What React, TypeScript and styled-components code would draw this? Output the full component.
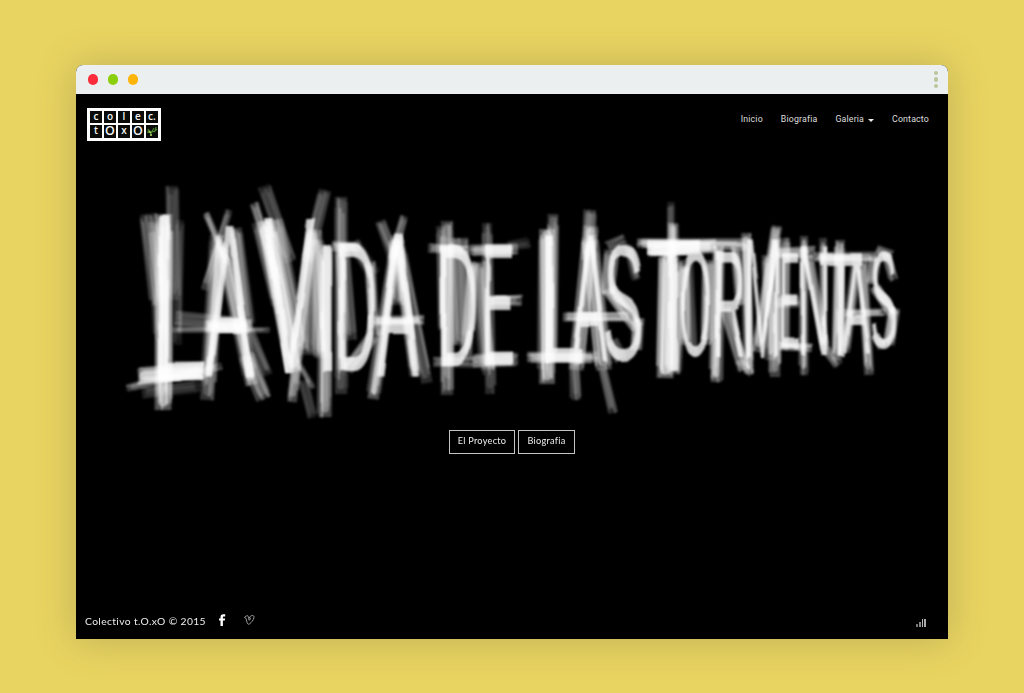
import React from "react";
import styled, { createGlobalStyle } from "styled-components";

const GlobalStyle = createGlobalStyle`
  * { box-sizing: border-box; }
  body { margin: 0; background: #e8d461; }
`;

const Page = styled.div`
  height: 693px;
  padding: 65px 76px 55px;
  overflow: hidden;
  background: #e8d461;
`;

const Window = styled.main`
  display: flex;
  flex-direction: column;
  width: 872px;
  height: 573.5px;
  border-radius: 7px 7px 0 0;
  overflow: hidden;
  background: #000;
  box-shadow: 0 1px 38px rgba(100, 88, 60, 0.3);
`;

const TitleBar = styled.div`
  display: flex;
  flex: 0 0 29px;
  align-items: center;
  justify-content: space-between;
  padding: 0 10px 0 11.5px;
  background: #ebeff0;
`;

const Lights = styled.div`
  display: flex;
  gap: 10px;
`;

const Light = styled.span<{ $color: string }>`
  width: 10.2px;
  height: 10.2px;
  border-radius: 50%;
  background: ${(p) => p.$color};
`;

const Dots = styled.div`
  display: flex;
  flex-direction: column;
  gap: 2px;
`;

const Dot = styled.span`
  width: 4.4px;
  height: 4.4px;
  border-radius: 50%;
  background: #bac69e;
`;

const Header = styled.header`
  display: flex;
  justify-content: space-between;
  align-items: flex-start;
  height: 84px;
  padding: 13px 19px 0 11px;
`;

const Logo = styled.div`
  display: grid;
  grid-template-columns: repeat(5, 12.3px);
  grid-template-rows: 12.6px 12.6px;
  gap: 1.7px;
  width: 74px;
  height: 33.5px;
  margin-top: 0.5px;
  padding: 3.3px 2.8px;
  background: #fff;
`;

const Cell = styled.span<{ $big?: boolean }>`
  display: flex;
  align-items: center;
  justify-content: center;
  padding-bottom: 2px;
  background: #090b09;
  color: #f3f3f3;
  font: 600 ${(p) => (p.$big ? 12.5 : 10)}px/11px "Open Sans", sans-serif;
`;

const Nav = styled.nav`
  display: flex;
  gap: 18px;
  padding-top: 6px;
`;

const NavLink = styled.a`
  display: flex;
  align-items: center;
  gap: 4px;
  color: #dedede;
  font: 400 8.8px/12px Roboto, sans-serif;
  letter-spacing: 0.16px;
`;

const Caret = styled.span`
  margin-top: 2px;
  border: 3px solid transparent;
  border-top-color: #eee;
  border-bottom: 0;
`;

const Hero = styled.section`
  flex: 1;
`;

const Artwork = styled.svg`
  display: block;
  width: 872px;
  height: 252px;
  overflow: visible;
`;

const Actions = styled.div`
  display: flex;
  justify-content: center;
  gap: 3px;
`;

const Button = styled.button<{ $width: number }>`
  width: ${(p) => p.$width}px;
  height: 24px;
  padding: 0 0 3px;
  border: 1px solid #c4c4c4;
  background: #000;
  color: #ececec;
  font: 400 9.2px/18px Lato, sans-serif;
  letter-spacing: 0.25px;
  white-space: nowrap;
`;

const Footer = styled.footer`
  display: flex;
  align-items: center;
  height: 36px;
  padding: 0 21px 0 9px;
  color: #eee;
`;

const Copyright = styled.span`
  width: 134px;
  font: 400 10.3px/16px Lato, sans-serif;
  letter-spacing: 0.37px;
  white-space: nowrap;
`;

const Social = styled.a<{ $width: number }>`
  display: flex;
  width: ${(p) => p.$width}px;
  margin-top: -1px;
  color: #fff;
`;

const Bars = styled.div`
  display: flex;
  align-items: flex-end;
  gap: 1px;
  height: 9px;
  margin: 3px 1px 0 auto;
`;

const Bar = styled.i<{ $h: number; $c: string }>`
  width: 1.7px;
  height: ${(p) => p.$h}px;
  background: ${(p) => p.$c};
`;

// Horizontal extents of Liberation Sans capitals, in 1/2048 em.
const METRICS: Record<string, [number, number]> = {
  L: [168, 1062],
  A: [4, 1362],
  V: [9, 1356],
  I: [189, 380],
  D: [168, 1381],
  E: [168, 1278],
  S: [93, 1272],
  T: [42, 1206],
  O: [97, 1495],
  R: [168, 1409],
  M: [168, 1539],
  N: [156, 1311],
};

type Glyph = [string, number, number, number, number];

// Letter, left, right, top, bottom.
const WORDS: Glyph[][] = [
  [["L", 159, 204, 215, 380], ["A", 206, 253, 228, 377]],
  [["V", 263, 315, 218, 374], ["I", 322, 331, 245, 372], ["D", 339, 375, 243, 371], ["A", 376, 420, 234, 376]],
  [["D", 441, 475, 245, 366], ["E", 485, 513, 245, 365]],
  [["L", 545, 582, 235, 362], ["A", 572, 608, 236, 362], ["S", 606, 641, 246, 359]],
  [
    ["T", 646, 700, 241, 372],
    ["O", 681, 710, 251, 357],
    ["R", 716, 744, 251, 357],
    ["M", 747, 778, 240, 357],
    ["E", 781, 799, 253, 349],
    ["N", 801, 827, 247, 355],
    ["T", 820, 862, 254, 357],
    ["A", 842, 871, 260, 354],
    ["S", 872, 895, 254, 348],
  ],
];

// Dry brush smears: x1, y1, x2, y2, width, strength.
const SMEARS: number[][] = [
  [172, 186, 173, 300, 14, 0.35],
  [148, 214, 160, 305, 18, 0.45],
  [155, 222, 162, 340, 15, 0.4],
  [164, 214, 163, 410, 19, 0.9],
  [180, 220, 178, 345, 9, 0.25],
  [127, 388, 222, 366, 9, 0.5],
  [138, 376, 205, 371, 17, 1],
  [142, 393, 200, 386, 12, 0.3],
  [206, 213, 228, 265, 7, 0.6],
  [229, 210, 204, 290, 8, 0.5],
  [217, 235, 207, 400, 16, 0.55],
  [220, 235, 209, 375, 9, 0.7],
  [235, 228, 247, 325, 15, 0.6],
  [222, 245, 252, 385, 15, 0.8],
  [245, 320, 268, 375, 11, 0.35],
  [246, 355, 264, 399, 18, 0.5],
  [172, 330, 270, 330, 6, 0.5],
  [175, 318, 245, 324, 16, 0.35],
  [205, 326, 252, 326, 13, 1],
  [264, 186, 290, 262, 14, 0.35],
  [254, 203, 279, 285, 9, 0.6],
  [258, 222, 278, 305, 15, 0.45],
  [274, 220, 300, 350, 20, 0.6],
  [266, 220, 294, 372, 18, 0.95],
  [325, 190, 307, 262, 14, 0.42],
  [312, 229, 292, 402, 11, 0.75],
  [315, 240, 310, 355, 21, 0.5],
  [300, 365, 313, 388, 6, 0.5],
  [303, 380, 312, 418, 10, 0.28],
  [326, 245, 325, 417, 15, 0.75],
  [315, 230, 321, 358, 14, 0.6],
  [341, 197, 341, 394, 14, 0.5],
  [341, 245, 342, 370, 12, 0.5],
  [342, 249, 350, 340, 16, 0.42],
  [332, 246, 360, 247, 12, 0.75],
  [353, 242, 374, 275, 15, 0.35],
  [370, 262, 374, 335, 11, 0.6],
  [374, 335, 347, 370, 14, 0.55],
  [380, 221, 395, 260, 11, 0.45],
  [404, 216, 391, 262, 9, 0.5],
  [397, 236, 373, 399, 13, 0.85],
  [400, 248, 427, 383, 13, 0.45],
  [397, 240, 415, 376, 12, 0.75],
  [397, 240, 398, 305, 18, 0.55],
  [373, 321, 424, 320, 11, 0.85],
  [447, 221, 447, 395, 14, 0.6],
  [441, 226, 443, 330, 11, 0.45],
  [447, 245, 448, 366, 14, 0.6],
  [458, 238, 462, 345, 22, 0.55],
  [473, 262, 466, 358, 11, 0.65],
  [428, 248, 470, 250, 10, 0.6],
  [433, 362, 475, 362, 10, 0.45],
  [487, 223, 490, 394, 11, 0.45],
  [478, 262, 488, 370, 16, 0.65],
  [470, 250, 518, 249, 12, 0.8],
  [508, 246, 530, 243, 10, 0.25],
  [489, 301, 522, 300, 11, 0.6],
  [472, 361, 518, 359, 14, 0.65],
  [553, 214, 551, 355, 12, 0.6],
  [547, 229, 547, 384, 18, 0.9],
  [527, 357, 598, 357, 12, 0.8],
  [590, 210, 587, 260, 14, 0.55],
  [591, 226, 576, 370, 17, 0.75],
  [590, 240, 604, 370, 18, 0.75],
  [574, 358, 576, 400, 10, 0.45],
  [602, 366, 613, 413, 9, 0.38],
  [563, 317, 629, 317, 10, 0.8],
  [607, 294, 611, 250, 15, 0.65],
  [608, 248, 626, 240, 14, 0.35],
  [628, 246, 636, 280, 9, 0.4],
  [608, 288, 638, 328, 14, 0.8],
  [638, 318, 636, 350, 13, 0.7],
  [612, 340, 621, 360, 12, 0.4],
  [671, 202, 671, 255, 8, 0.38],
  [673, 223, 673, 260, 11, 0.75],
  [637, 243, 748, 244, 10, 0.85],
  [648, 251, 716, 247, 13, 0.9],
  [668, 252, 665, 378, 19, 1],
  [680, 260, 674, 374, 15, 0.65],
  [684, 266, 686, 345, 13, 0.7],
  [708, 260, 706, 345, 12, 0.7],
  [689, 262, 694, 355, 9, 0.3],
  [719, 246, 716, 382, 12, 0.85],
  [735, 246, 740, 305, 10, 0.6],
  [725, 308, 745, 370, 12, 0.6],
  [746, 233, 749, 374, 11, 0.85],
  [777, 226, 757, 352, 12, 0.8],
  [767, 255, 771, 360, 12, 0.65],
  [776, 240, 775, 377, 12, 0.7],
  [738, 360, 752, 374, 9, 0.45],
  [786, 238, 784, 350, 9, 0.65],
  [776, 253, 815, 252, 10, 0.75],
  [776, 303, 800, 302, 10, 0.5],
  [778, 346, 812, 348, 9, 0.75],
  [804, 236, 804, 375, 9, 0.7],
  [808, 255, 825, 350, 11, 0.65],
  [823, 238, 824, 349, 9, 0.55],
  [825, 348, 838, 366, 10, 0.5],
  [814, 257, 877, 257, 10, 0.75],
  [840, 240, 837, 360, 11, 0.75],
  [857, 260, 845, 352, 11, 0.65],
  [862, 260, 869, 375, 11, 0.65],
  [843, 313, 886, 312, 9, 0.75],
  [872, 284, 876, 256, 11, 0.65],
  [876, 250, 892, 256, 11, 0.55],
  [886, 253, 894, 280, 10, 0.45],
  [874, 286, 894, 316, 12, 0.7],
  [894, 308, 889, 345, 13, 0.7],
  [875, 335, 882, 347, 10, 0.5],
];

const noise = (n: number) => {
  const v = Math.sin(n * 91.345 + 17.13) * 43758.5453;
  return v - Math.floor(v);
};

function Smear({ data, seed }: { data: number[]; seed: number }) {
  const [x1, y1, x2, y2, width, strength] = data;
  const length = Math.hypot(x2 - x1, y2 - y1);
  const nx = -(y2 - y1) / length;
  const ny = (x2 - x1) / length;
  const count = Math.max(3, Math.round(width / 1.8));
  const inset = Math.min(0.2, 6 / length);
  return (
    <g stroke="#fff" strokeLinecap="round">
      <line x1={x1} y1={y1} x2={x2} y2={y2} strokeWidth={width * 0.88} opacity={strength * 0.36} strokeLinecap="butt" />
      <line
        x1={x1 + (x2 - x1) * inset}
        y1={y1 + (y2 - y1) * inset}
        x2={x2 - (x2 - x1) * inset * 1.4}
        y2={y2 - (y2 - y1) * inset * 1.4}
        strokeWidth={width * 0.55}
        opacity={strength * strength * 0.6}
      />
      {Array.from({ length: count }, (_, i) => {
        const k = seed * 31 + i * 7;
        const offset = ((i + 0.5) / count - 0.5) * width * 0.95;
        const drift = (noise(k) - 0.5) * 3.2;
        const start = noise(k + 1) * 0.1;
        const end = 1 - noise(k + 2) * 0.12;
        return (
          <line
            key={i}
            x1={x1 + (x2 - x1) * start + nx * offset}
            y1={y1 + (y2 - y1) * start + ny * offset}
            x2={x1 + (x2 - x1) * end + nx * (offset + drift)}
            y2={y1 + (y2 - y1) * end + ny * (offset + drift)}
            strokeWidth={1.2 + noise(k + 3) * 1.8}
            opacity={strength * (0.08 + noise(k + 4) * 0.48)}
          />
        );
      })}
    </g>
  );
}

function Letter({ glyph }: { glyph: Glyph }) {
  const [char, left, right, top, bottom] = glyph;
  const [from, to] = METRICS[char];
  const sx = (right - left) / ((to - from) * (100 / 2048));
  const sy = (bottom - top) / 68.8;
  return (
    <text
      transform={`translate(${left - from * (100 / 2048) * sx} ${bottom}) scale(${sx} ${sy})`}
      fontFamily="Liberation Sans, sans-serif"
      fontSize="100"
    >
      {char}
    </text>
  );
}

function Title() {
  return (
    <Artwork viewBox="76 178 872 252" role="img" aria-label="La vida de las tormentas">
      <defs>
        <filter id="dry" x="-5%" y="-5%" width="110%" height="110%" colorInterpolationFilters="sRGB">
          <feGaussianBlur stdDeviation="1.2" />
        </filter>
        <filter id="ink" x="-5%" y="-5%" width="110%" height="110%" colorInterpolationFilters="sRGB">
          <feTurbulence type="fractalNoise" baseFrequency="0.035 0.02" numOctaves="1" seed="9" result="n" />
          <feDisplacementMap in="SourceGraphic" in2="n" scale="5" xChannelSelector="R" yChannelSelector="G" />
          <feGaussianBlur stdDeviation="0.95" />
        </filter>
      </defs>
      <g filter="url(#dry)">
        {SMEARS.map((s, i) => (
          <Smear key={i} data={s} seed={i + 1} />
        ))}
      </g>
      <g filter="url(#ink)" fill="#fff" opacity="0.8">
        {WORDS.map((word, i) => (
          <g key={i}>
            {word.map((glyph, j) => (
              <Letter key={j} glyph={glyph} />
            ))}
          </g>
        ))}
      </g>
    </Artwork>
  );
}

const Sprout = () => (
  <svg width="12" height="12" viewBox="0 0 12 12" fill="none" stroke="#4d8a2c">
    <path d="M5 12V8L2.5 6M5 9l3-5M1 8l4 1M10 3l-1 4 2-2M2 5l1 3M6 8l3-1" strokeWidth="1.1" />
    <path d="M3 7.5 5 9M4 11h2" stroke="#b3cf60" strokeWidth="1.3" />
  </svg>
);

const Facebook = () => (
  <svg width="7" height="12" viewBox="0 0 7 12" fill="currentColor">
    <path d="M1.5 12V6.5H0v-2h1.5V3.2C1.5 1.2 2.500.3 4.300.3h1.900v2.100H4.900c-.8 0-1 .3-1 1v1.100h2.200l-.3 2H3.900V12z" />
  </svg>
);

const Vimeo = () => (
  <svg width="11" height="10" viewBox="0 0 11 10" fill="none" stroke="#c8c8c8" strokeWidth="0.75" strokeLinejoin="round">
    <path d="M0.5 2.4 L2.8 0.7 C4 0.4 4.3 1.4 4.5 2.6 L5 5.2 C5.3 5.8 6.3 4.2 6.4 3.4 C6.4 2.8 6 2.8 5.4 3 C5.900 1.300 7 0.500 8.400 0.500 C9.800 0.500 10.200 1.400 9.900 2.700 C9.400 5 7.400 7.500 5.700 8.800 C4.400 9.600 3.500 9.100 3.100 7.800 L2.100 3.800 C1.900 3 1.500 2.900 1 3.200 Z" />
  </svg>
);

export default function App() {
  return (
    <Page>
      <GlobalStyle />
      <Window>
        <TitleBar>
          <Lights>
            <Light $color="#fb2c3b" />
            <Light $color="#8bce0b" />
            <Light $color="#fdb50b" />
          </Lights>
          <Dots>
            <Dot />
            <Dot />
            <Dot />
          </Dots>
        </TitleBar>
        <Header>
          <Logo>
            <Cell>c</Cell>
            <Cell>o</Cell>
            <Cell>l</Cell>
            <Cell>e</Cell>
            <Cell>c.</Cell>
            <Cell>t</Cell>
            <Cell $big>O</Cell>
            <Cell>x</Cell>
            <Cell $big>O</Cell>
            <Cell>
              <Sprout />
            </Cell>
          </Logo>
          <Nav>
            <NavLink>Inicio</NavLink>
            <NavLink>Biografia</NavLink>
            <NavLink>
              Galeria <Caret />
            </NavLink>
            <NavLink>Contacto</NavLink>
          </Nav>
        </Header>
        <Hero>
          <Title />
          <Actions>
            <Button $width={66}>El Proyecto</Button>
            <Button $width={57}>Biografia</Button>
          </Actions>
        </Hero>
        <Footer>
          <Copyright>Colectivo t.O.xO © 2015</Copyright>
          <Social $width={25}>
            <Facebook />
          </Social>
          <Social $width={12}>
            <Vimeo />
          </Social>
          <Bars>
            <Bar $h={3} $c="#777" />
            <Bar $h={5} $c="#888" />
            <Bar $h={8} $c="#bbb" />
            <Bar $h={8} $c="#aaa" />
          </Bars>
        </Footer>
      </Window>
    </Page>
  );
}
